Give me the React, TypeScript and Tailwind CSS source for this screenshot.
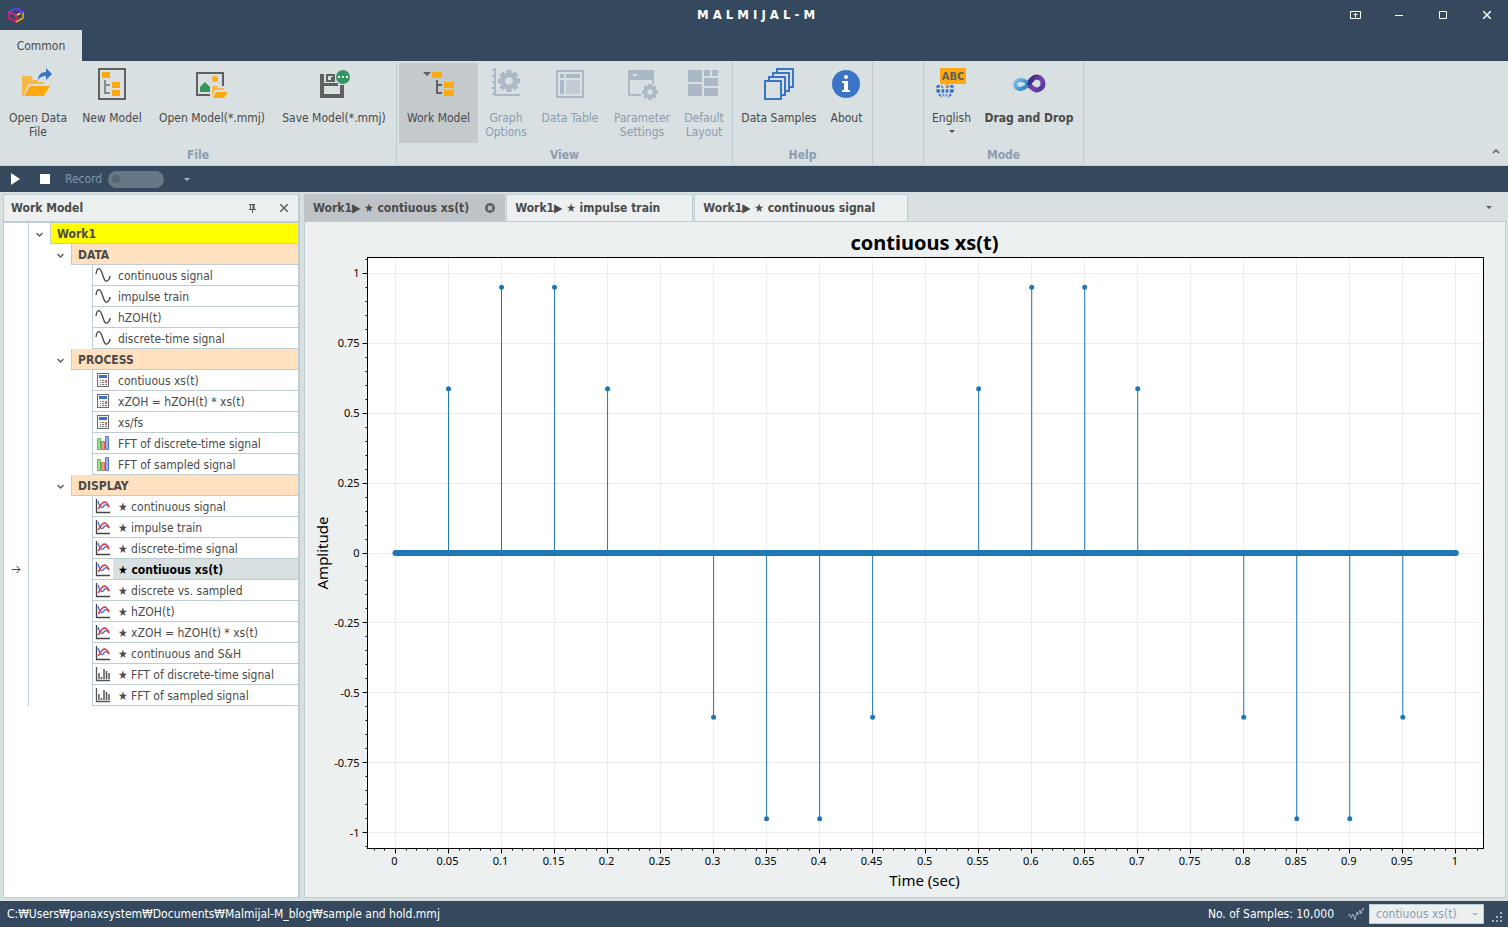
import React, { useLayoutEffect, useRef, useState } from "react";
import clsx from "clsx";

const GRAY = "#606060";
const AMBER = "#fda90f";
const BLUE = "#3b74c4";
const MUTED = "#abb8c5";

const Gear: React.FC<{ cx: number; cy: number; size: number }> = ({ cx, cy, size }) => (
  <g transform={`translate(${cx} ${cy}) scale(${size / 22})`} fill={MUTED}>
    {[0, 45, 90, 135].map((angle) => (
      <rect key={angle} x="-2.5" y="-11" width="5" height="22" transform={`rotate(${angle})`} />
    ))}
    <circle r="8.5" />
    <circle r="3.8" fill="#d8e0e1" />
  </g>
);

const Icon: React.FC<{ children: React.ReactNode }> = ({ children }) => (
  <svg className="size-8 shrink-0 overflow-visible" viewBox="0 0 32 32" fill="none" aria-hidden="true">
    {children}
  </svg>
);

const OpenDataIcon = () => (
  <Icon>
    <path d="M0 28V8h9l2 4h5v2h6v2H7L1 28z" fill="#f6b846" />
    <path d="M8 18h20l-6 10H2z" fill={AMBER} />
    <path d="M24 0l6 6-6 6V8c-4 0-6 1-8 4 0-5 3-8 8-8z" fill={BLUE} />
  </Icon>
);

const NewModelIcon = () => (
  <Icon>
    <rect x="3" y="1" width="26" height="30" stroke={GRAY} strokeWidth="2" />
    <path d="M6 4h8v6H6zM16 14h8v6h-8zM16 22h8v6h-8z" fill={AMBER} />
    <path d="M9 12v13h5M9 17h5" stroke="#8b8b8b" strokeWidth="2" />
  </Icon>
);

const OpenModelIcon = () => (
  <Icon>
    <path d="M14 27H1V5h26v13" stroke={GRAY} strokeWidth="2" />
    <circle cx="19" cy="11" r="3" fill={AMBER} />
    <path d="M4 24v-5l5-5 5 5v5z" fill="#36955e" />
    <path d="M16 29V18h5l1 2h6v2h-9l-3 7z" fill="#f6b846" />
    <path d="M20 24h12l-4 6H17z" fill={AMBER} />
  </Icon>
);

const SaveModelIcon = () => (
  <Icon>
    <path d="M2 6h4v9h14v3H6v8h16v-9h4v13H2z" fill={GRAY} />
    <path d="M9 7h7v6H9z" stroke={GRAY} strokeWidth="2" />
    <path d="M13 9h2v3h-2z" fill={GRAY} />
    <circle cx="25" cy="9" r="8" fill="#d8e0e1" />
    <circle cx="25" cy="9" r="7" fill="#36955e" />
    <path d="M20 8h2v2h-2zM24 8h2v2h-2zM28 8h2v2h-2z" fill="#fff" />
  </Icon>
);

const WorkModelIcon = () => (
  <Icon>
    <path d="M0 4h8L4 8z" fill={GRAY} />
    <path d="M9 4h10v6H9zM21 14h10v6H21zM21 22h10v6H21z" fill={AMBER} />
    <path d="M14 12v13h5M14 17h5" stroke={GRAY} strokeWidth="2" />
  </Icon>
);

const GraphIcon = () => (
  <Icon>
    <path d="M5 0v27h25M2 2h3M2 8h3M2 14h3M2 20h3M2 26h3" stroke={MUTED} strokeWidth="2" />
    <Gear cx={19} cy={13} size={22} />
  </Icon>
);

const TableIcon = () => (
  <Icon>
    <rect x="3" y="3" width="26" height="26" stroke={MUTED} strokeWidth="2" />
    <path d="M6 6h4v4H6zM12 6h14v4H12zM6 12h4v14H6z" fill={MUTED} />
    <path d="M12 12h14v14H12z" fill="#c3cbd3" />
  </Icon>
);

const ParameterIcon = () => (
  <Icon>
    <path d="M2 2h26v10H2z" fill={MUTED} />
    <path d="M3 10v17h12M27 10v6" stroke={MUTED} strokeWidth="2" />
    <path d="M6 6h6l-3 3z" fill="#d8e0e1" />
    <Gear cx={24} cy={24} size={16} />
  </Icon>
);

const LayoutIcon = () => (
  <Icon>
    <path d="M0 2h14v12H0zM16 2h6v6h-6zM24 2h6v6h-6zM16 10h14v8H16zM0 16h14v12H0zM16 20h14v8H16z" fill={MUTED} />
  </Icon>
);

const SamplesIcon = () => (
  <Icon>
    {[0, 4, 8, 12].map((n) => (
      <rect key={n} x={14 - n} y={1 + n} width="16" height="18" fill="#d8e0e1" stroke={BLUE} strokeWidth="2" />
    ))}
  </Icon>
);

const AboutIcon = () => (
  <Icon>
    <circle cx="15" cy="16" r="14" fill={BLUE} />
    <circle cx="15" cy="9" r="2" fill="#fff" />
    <path d="M11 13h6v9h2v2h-8v-2h2v-7h-2z" fill="#fff" />
  </Icon>
);

const EnglishIcon = () => (
  <Icon>
    <circle cx="9" cy="21" r="9" fill={BLUE} />
    <path d="M0 20.500h18M0 25.500h18M9 12v18" stroke="#d8e0e1" strokeWidth="1.500" />
    <ellipse cx="9" cy="20" rx="4.500" ry="10" stroke="#d8e0e1" strokeWidth="1.500" />
    <path d="M-1 10h20v7h-7l-4 4-2-4h-7z" fill="#d8e0e1" />
    <path d="M4 0h26v16H13l-3 3-1-3H4z" fill={AMBER} />
    <text x="17" y="12" textAnchor="middle" fill={GRAY} className="text-[11px] font-bold">ABC</text>
  </Icon>
);

const DragIcon = () => (
  <Icon>
    <defs>
      <linearGradient id="loop" x1="16" x2="32" y1="8" y2="24" gradientUnits="userSpaceOnUse">
        <stop stopColor="#2f2779" />
        <stop offset="0.5" stopColor="#7a3fb0" />
        <stop offset="1" stopColor="#41318c" />
      </linearGradient>
      <linearGradient id="loopLeft" x1="0" x2="16" y1="10" y2="22" gradientUnits="userSpaceOnUse">
        <stop stopColor="#8ccff0" />
        <stop offset="0.5" stopColor="#4fa3dc" />
        <stop offset="1" stopColor="#2d6fae" />
      </linearGradient>
    </defs>
    <path
      d="M16 17c3 3 5 5 8 5 8-1 8-12 0-13-4 0-6 3-9 7"
      stroke="url(#loop)"
      strokeWidth="5"
    />
    <path
      d="M17 18c-3-4-6-6-9-6-7 0-8 8-1 9 4 0 7-3 10-6"
      stroke="url(#loopLeft)"
      strokeWidth="4"
    />
    <path d="M15 17c2-2 3-4 5-6" stroke="#41318c" strokeWidth="4" />
  </Icon>
);

type RibbonItem = {
  label: string;
  icon: React.FC;
  width: string;
  active?: boolean;
  disabled?: boolean;
  bold?: boolean;
  menu?: boolean;
};

const ribbonGroups: { name: string; items: RibbonItem[] }[] = [
  {
    name: "File",
    items: [
      { label: "Open Data File", icon: OpenDataIcon, width: "w-[72px]" },
      { label: "New Model", icon: NewModelIcon, width: "w-[76px]" },
      { label: "Open Model(*.mmj)", icon: OpenModelIcon, width: "w-[124px]" },
      { label: "Save Model(*.mmj)", icon: SaveModelIcon, width: "w-[120px]" },
    ],
  },
  {
    name: "View",
    items: [
      { label: "Work Model", icon: WorkModelIcon, width: "w-[79px]", active: true },
      { label: "Graph Options", icon: GraphIcon, width: "w-14", disabled: true },
      { label: "Data Table", icon: TableIcon, width: "w-[72px]", disabled: true },
      { label: "Parameter Settings", icon: ParameterIcon, width: "w-[72px]", disabled: true },
      { label: "Default Layout", icon: LayoutIcon, width: "w-[52px]", disabled: true },
    ],
  },
  {
    name: "Help",
    items: [
      { label: "Data Samples", icon: SamplesIcon, width: "w-[88px]" },
      { label: "About", icon: AboutIcon, width: "w-[47px]" },
    ],
  },
  { name: "", items: [] },
  {
    name: "Mode",
    items: [
      { label: "English", icon: EnglishIcon, width: "w-[51px]", menu: true },
      { label: "Drag and Drop", icon: DragIcon, width: "w-[104px]", bold: true },
    ],
  },
];

const Caret: React.FC<{ className?: string }> = ({ className }) => (
  <svg className={clsx("h-[3px] w-[6px]", className)} viewBox="0 0 6 3" fill="currentColor" aria-hidden="true">
    <path d="M0 0h6L3 3z" />
  </svg>
);

const Ribbon: React.FC = () => (
  <div className="flex h-[105px] shrink-0 border-b border-[#bdcdd1] bg-[#d8e0e1]">
    {ribbonGroups.map((group, i) => (
      <section
        key={i}
        aria-label={group.name || undefined}
        className="flex min-w-[51px] flex-col border-r border-[#bdcdd1] px-[2px] pt-[2px]"
      >
        <div className="flex h-20">
          {group.items.map((item) => (
            <button
              key={item.label}
              disabled={item.disabled}
              className={clsx(
                "flex flex-col items-center pt-[5px] leading-[14px]",
                item.width,
                item.active && "bg-[#c4c9cb]",
                item.disabled && "text-[#8c9db1]",
                item.bold && "font-bold"
              )}
            >
              <item.icon />
              <span className={clsx("mt-[11px]", item.label.includes("(") && "whitespace-nowrap")}>{item.label}</span>
              {item.menu && <Caret className="mt-[5px]" />}
            </button>
          ))}
        </div>
        <div className="mt-[5px] text-center leading-[14px] font-bold text-[#8c9db1]">{group.name}</div>
      </section>
    ))}
    <button aria-label="Collapse ribbon" className="mr-2 mb-2 ml-auto self-end">
      <svg className="h-2 w-2" viewBox="0 0 8 8" fill="none" stroke="#606060" strokeWidth="1.5">
        <path d="M1 4l3-3 3 3" />
      </svg>
    </button>
  </div>
);

const TitleBar: React.FC = () => (
  <header className="flex h-[30px] shrink-0 items-center text-white">
    <div className="flex-1 pl-2">
      <svg className="size-4" viewBox="0 0 16 16" fill="none" strokeWidth="1.5" strokeLinejoin="round">
        <path d="M1 5l7-4 7 4-7 3z" stroke="#3d5cff" />
        <path d="M1 5l7 3v7l-7-4z" stroke="#f0147c" />
        <path d="M8 8v7" stroke="#f02040" />
        <path d="M15 5v6l-7 4" stroke="#f2a526" />
        <path d="M9 8l6-3" stroke="#e8d02a" />
        <path d="M8 1l7 4-3 1.500" stroke="#6a35e8" />
      </svg>
    </div>
    <h1 className="text-[13px] font-bold whitespace-pre">M A L M I J A L - M</h1>
    <div className="flex flex-1 justify-end gap-[10px] pr-1">
      <button aria-label="Ribbon display options" className="grid h-6 w-[34px] place-items-center">
        <svg className="h-2 w-[11px]" viewBox="0 0 11 8" fill="none" stroke="currentColor">
          <path d="M.5.5h10v7H.5zM5.5 6.500V2M3.500 3.500h4" />
        </svg>
      </button>
      <button aria-label="Minimize" className="grid h-6 w-[34px] place-items-center">
        <svg className="size-2" viewBox="0 0 8 8" fill="none" stroke="currentColor">
          <path d="M0 4.500h8" />
        </svg>
      </button>
      <button aria-label="Maximize" className="grid h-6 w-[34px] place-items-center">
        <svg className="size-2" viewBox="0 0 8 8" fill="none" stroke="currentColor">
          <path d="M.5.5h7v7h-7z" />
        </svg>
      </button>
      <button aria-label="Close" className="grid h-6 w-[34px] place-items-center">
        <svg className="size-2" viewBox="0 0 8 8" fill="none" stroke="currentColor" strokeWidth="1.5">
          <path d="M0 0l8 8M8 0L0 8" />
        </svg>
      </button>
    </div>
  </header>
);

const RunBar: React.FC = () => (
  <div className="flex h-[26px] shrink-0 items-center text-[#8096a9]">
    <button aria-label="Run" className="ml-[10px] text-white">
      <svg className="h-3 w-[10px]" viewBox="0 0 10 12" fill="currentColor">
        <path d="M1 0l9 6-9 6z" />
      </svg>
    </button>
    <button aria-label="Stop" className="ml-5 size-[10px] bg-white" />
    <label className="ml-[15px] flex items-center gap-[6px]">
      Record
      <input
        type="checkbox"
        role="switch"
        disabled
        className="flex h-[17px] w-14 appearance-none items-center rounded-full bg-[#667886] pl-1 before:size-2 before:rounded-full before:bg-[#56656f] before:content-['']"
      />
    </label>
    <button aria-label="More commands" className="ml-5 text-[#a9b7c2]">
      <Caret />
    </button>
  </div>
);

type Kind = "wave" | "calc" | "fft" | "plot" | "bars";

const TreeIcon: React.FC<{ kind: Kind }> = ({ kind }) => (
  <svg className="size-4 shrink-0" viewBox="0 0 16 16" fill="none" aria-hidden="true">
    {kind === "wave" && <path d="M1 7C2 0 5 0 7 6s3 9 5 8c2-1 3-3 3-5" stroke="#444" strokeWidth="1.3" />}
    {kind === "calc" && (
      <>
        <rect x="2.500" y="1.500" width="11" height="13" fill="#f4f4f4" stroke="#6b6b6b" />
        <path d="M4 3h8v3H4z" fill="#3f6fc0" />
        <path d="M5 8h1v1H5zM7 8h2v1H7zM5 10h1v1H5zM7 10h2v1H7zM5 12h1v1H5zM7 12h2v1H7z" fill="#777" />
        <path d="M10 8h2v3h-2z" fill="#cf6a6a" />
        <path d="M10 12h2v1h-2z" fill="#777" />
      </>
    )}
    {kind === "fft" && (
      <>
        <path d="M2.500 3.500h3v11h-3z" fill="#9be38a" stroke="#5fb850" />
        <path d="M6.500 6.500h3v8h-3z" fill="#f39a92" stroke="#d36a60" />
        <path d="M10.500 1.500h3v13h-3z" fill="#9bb2f4" stroke="#5676cc" />
      </>
    )}
    {kind === "plot" && (
      <>
        <path d="M1.500 1v13.500H15" stroke="#444" strokeWidth="1.300" />
        <path d="M3 3c1 4 3 8 5 6s3-4 6 0" stroke="#4468d8" strokeWidth="1.300" />
        <path d="M3 11c2-2 3-6 6-7 3 0 4 2 5 5" stroke="#e03848" strokeWidth="1.500" />
      </>
    )}
    {kind === "bars" && (
      <>
        <path d="M1.500 1v13.500H15" stroke="#555" strokeWidth="1.300" />
        <path d="M4 7v6M6.500 11v2M9 3v10M11.500 5v8M14 7v6" stroke="#555" strokeWidth="1.500" />
      </>
    )}
  </svg>
);

const sections: { title: string; items: [Kind, string][] }[] = [
  {
    title: "DATA",
    items: [
      ["wave", "continuous signal"],
      ["wave", "impulse train"],
      ["wave", "hZOH(t)"],
      ["wave", "discrete-time signal"],
    ],
  },
  {
    title: "PROCESS",
    items: [
      ["calc", "contiuous xs(t)"],
      ["calc", "xZOH = hZOH(t) * xs(t)"],
      ["calc", "xs/fs"],
      ["fft", "FFT of discrete-time signal"],
      ["fft", "FFT of sampled signal"],
    ],
  },
  {
    title: "DISPLAY",
    items: [
      ["plot", "★ continuous signal"],
      ["plot", "★ impulse train"],
      ["plot", "★ discrete-time signal"],
      ["plot", "★ contiuous xs(t)"],
      ["plot", "★ discrete vs. sampled"],
      ["plot", "★ hZOH(t)"],
      ["plot", "★ xZOH = hZOH(t) * xs(t)"],
      ["plot", "★ continuous and S&H"],
      ["bars", "★ FFT of discrete-time signal"],
      ["bars", "★ FFT of sampled signal"],
    ],
  },
];

const Gutter: React.FC<{ current?: boolean }> = ({ current }) => (
  <span className="grid w-[25px] shrink-0 place-items-center border-r border-[#bdcdd1] text-[#34495e]">
    {current && (
      <svg className="h-[9px] w-[9px]" viewBox="0 0 9 9" fill="none" stroke="currentColor">
        <path d="M0 4.500h8M4.500 1L8 4.500 4.500 8" />
      </svg>
    )}
  </span>
);

const Expander: React.FC<{ label: string; open: boolean; onClick: () => void }> = ({ label, open, onClick }) => (
  <button aria-label={label} aria-expanded={open} onClick={onClick} className="grid w-[21px] shrink-0 place-items-center pt-[2px]">
    <svg className="h-[5px] w-[7px]" viewBox="0 0 7 5" fill="none" stroke="#606060" strokeWidth="1.500">
      <path d="M.5 1l3 3 3-3" />
    </svg>
  </button>
);

const WorkModelPanel: React.FC = () => {
  const [closed, setClosed] = useState<string[]>([]);
  const [selected, setSelected] = useState("★ contiuous xs(t)");
  const toggle = (name: string) =>
    setClosed((prev) => (prev.includes(name) ? prev.filter((n) => n !== name) : [...prev, name]));

  return (
    <aside className="flex w-[297px] shrink-0 flex-col border border-r-2 border-[#bdcdd1] bg-white">
      <div className="flex h-7 shrink-0 items-center border-b-2 border-[#bdcdd1] bg-[#ecf0f1] pl-[7px]">
        <h2 className="flex-1 font-bold">Work Model</h2>
        <button aria-label="Pin" className="grid size-6 place-items-center">
          <svg className="h-[9px] w-[7px]" viewBox="0 0 7 9" fill="none" stroke="#555">
            <path d="M1.500 0v5M0 .5h6M0 5.500h7M3.500 5v4" />
            <path d="M4.500 0v5" strokeWidth="2" />
          </svg>
        </button>
        <button aria-label="Close panel" className="mr-[2px] ml-2 grid size-6 place-items-center">
          <svg className="size-2" viewBox="0 0 8 8" stroke="#606060" strokeWidth="1.500">
            <path d="M0 0l8 8M8 0L0 8" />
          </svg>
        </button>
      </div>
      <ul className="leading-[22px]">
        <li className="flex h-[21px]">
          <Gutter />
          <Expander label="Toggle Work1" open={!closed.includes("Work1")} onClick={() => toggle("Work1")} />
          <span className="flex-1 border-b border-l border-[#bdcdd1] bg-[#ffff00] pl-[6px] font-bold">Work1</span>
        </li>
        {!closed.includes("Work1") &&
          sections.map((section) => (
            <li key={section.title}>
              <div className="flex h-[21px]">
                <Gutter />
                <span className="w-[21px]" />
                <Expander
                  label={`Toggle ${section.title}`}
                  open={!closed.includes(section.title)}
                  onClick={() => toggle(section.title)}
                />
                <span className="flex-1 border-b border-l border-[#bdcdd1] bg-[#ffe1c0] pl-[6px] font-bold">
                  {section.title}
                </span>
              </div>
              {!closed.includes(section.title) && (
                <ul>
                  {section.items.map(([kind, label]) => {
                    const current = label === selected;
                    return (
                      <li key={label} className="flex h-[21px]">
                        <Gutter current={current} />
                        <span className="w-[63px]" />
                        <button
                          onClick={() => setSelected(label)}
                          className="flex flex-1 items-center border-b border-l border-[#bdcdd1] pl-[2px] text-left"
                        >
                          <TreeIcon kind={kind} />
                          <span
                            className={clsx(
                              "ml-[2px] h-5 flex-1 pl-[5px] whitespace-nowrap",
                              current && "bg-[#d8e0e1] font-bold text-black"
                            )}
                          >
                            {label}
                          </span>
                        </button>
                      </li>
                    );
                  })}
                </ul>
              )}
            </li>
          ))}
      </ul>
    </aside>
  );
};

const samples = Array.from({ length: 21 }, (_, i) => ({
  t: i * 0.05,
  value: Math.sin(4 * Math.PI * i * 0.05),
})).filter((s) => Math.abs(s.value) > 0.01);

const range = (from: number, to: number) => Array.from({ length: to - from + 1 }, (_, i) => from + i);

const StemChart: React.FC = () => {
  const ref = useRef<HTMLDivElement>(null);
  const [size, setSize] = useState({ width: 1200, height: 675 });

  useLayoutEffect(() => {
    const el = ref.current;
    if (!el) return;
    const update = () => setSize({ width: el.clientWidth, height: el.clientHeight });
    update();
    const observer = new ResizeObserver(update);
    observer.observe(el);
    return () => observer.disconnect();
  }, []);

  const left = 62.5;
  const top = 35.5;
  const right = size.width - 21.5;
  const bottom = size.height - 48.5;
  const x = (t: number) => left + ((t + 0.0264) / 1.0525) * (right - left);
  const y = (v: number) => (top + bottom) / 2 - (v / 2.1144) * (bottom - top);
  const snap = (n: number) => Math.floor(n) + 0.5;

  return (
    <div ref={ref} className="min-h-0 flex-1 overflow-hidden">
      <svg
        width={size.width}
        height={size.height}
        className="block font-['Noto_Sans',sans-serif] text-[11px]"
        role="img"
        aria-label="contiuous xs(t)"
      >
        <rect x={left} y={top} width={right - left} height={bottom - top} fill="#fff" />
        {range(0, 20).map((i) => (
          <path key={i} d={`M${snap(x(i / 20))} ${top}V${bottom}`} stroke="#ededed" />
        ))}
        {range(-4, 4).map((i) => (
          <path key={i} d={`M${left} ${snap(y(i / 4))}H${right}`} stroke="#ededed" />
        ))}
        <g stroke="#000">
          {range(-2, 102).map((i) => (
            <path key={i} d={`M${snap(x(i / 100))} ${bottom}v${i % 5 === 0 && i >= 0 && i <= 100 ? 5 : 2}`} />
          ))}
          {range(-21, 21).map((i) => (
            <path key={i} d={`M${left} ${snap(y(i / 20))}h${i % 5 === 0 ? -5 : -2}`} />
          ))}
        </g>
        <rect x={left} y={top} width={right - left} height={bottom - top} fill="none" stroke="#000" />
        {range(0, 20).map((i) => (
          <text key={i} x={x(i / 20) - 1} y={bottom + 16} textAnchor="middle">
            {i / 20}
          </text>
        ))}
        {range(-4, 4).map((i) => (
          <text key={i} x={left - 8} y={y(i / 4) + 4} textAnchor="end">
            {i / 4}
          </text>
        ))}
        <g stroke="#1f77b4" fill="#1f77b4">
          {samples.map(({ t, value }) => (
            <g key={t}>
              <path d={`M${x(t)} ${y(0)}V${y(value)}`} />
              <circle cx={x(t)} cy={y(value)} r="2.5" stroke="none" />
            </g>
          ))}
          <path d={`M${x(0)} ${y(0)}H${x(1)}`} strokeWidth="6" strokeLinecap="round" />
        </g>
        <text x={(left + right) / 2 - 1} y="28" textAnchor="middle" className="text-[20px] font-bold">
          contiuous xs(t)
        </text>
        <text x={(left + right) / 2 - 1} y={bottom + 37} textAnchor="middle" className="text-[15px]">
          Time (sec)
        </text>
        <text transform={`translate(23 ${(top + bottom) / 2}) rotate(-90)`} textAnchor="middle" className="text-[15px]">
          Amplitude
        </text>
      </svg>
    </div>
  );
};

const tabs = ["Work1▶ ★ contiuous xs(t)", "Work1▶ ★ impulse train", "Work1▶ ★ continuous signal"];

const Documents: React.FC = () => {
  const [active, setActive] = useState(0);
  return (
    <main className="ml-1 flex min-w-0 flex-1 flex-col">
      <div className="flex h-7 shrink-0 gap-px border-b border-[#bdcdd1]" role="tablist">
        {tabs.map((tab, i) => (
          <div
            key={tab}
            className={clsx(
              "flex items-center border border-b-0 font-bold",
              i === active ? "border-[#bdc3c7] bg-[#bdc3c7] pr-[9px]" : "border-[#bdcdd1] bg-[#ecf0f1] pr-8"
            )}
          >
            <button role="tab" aria-selected={i === active} onClick={() => setActive(i)} className="h-full pl-2 whitespace-nowrap">
              {tab}
            </button>
            {i === active && (
              <button aria-label="Close tab" className="ml-4">
                <svg className="size-[10px]" viewBox="0 0 10 10">
                  <circle cx="5" cy="5" r="5" fill="#606060" />
                  <path d="M3 3l4 4M7 3L3 7" stroke="#d5d9dc" strokeWidth="1.500" />
                </svg>
              </button>
            )}
          </div>
        ))}
        <button aria-label="Open documents" className="mr-[14px] ml-auto text-[#606060]">
          <Caret />
        </button>
      </div>
      <div className="flex min-h-0 flex-1 flex-col border border-t-0 border-[#bdcdd1] bg-[#ecf0f1]">
        <StemChart />
      </div>
    </main>
  );
};

const StatusBar: React.FC = () => (
  <footer className="flex h-[26px] shrink-0 items-center pr-1 pl-[7px] text-white">
    <span className="flex-1">C:₩Users₩panaxsystem₩Documents₩Malmijal-M_blog₩sample and hold.mmj</span>
    <span>No. of Samples: 10,000</span>
    <svg className="mx-[14px] mr-[5px] h-[14px] w-4" viewBox="0 0 16 14" fill="none" stroke="#9aaab8" aria-hidden="true">
      <path d="M0 9l2-2 1 4 2-4 2 6 2-8 1 3 2-5 1 4 2-6 1 2 1-3" />
    </svg>
    <div className="relative">
      <select
        aria-label="Signal"
        disabled
        className="h-5 w-[115px] appearance-none border border-[#bdcdd1] bg-[#ecf0f1] pl-[6px] leading-[18px] text-[#8c9db1] opacity-100"
      >
        <option>contiuous xs(t)</option>
      </select>
      <Caret className="absolute top-[9px] right-[6px] text-[#b3bdc4]" />
    </div>
    <svg className="mt-2 ml-2 size-3" viewBox="0 0 12 12" fill="#a3b1bd" aria-hidden="true">
      <path d="M8 0h2v2H8zM4 4h2v2H4zM8 4h2v2H8zM0 8h2v2H0zM4 8h2v2H4zM8 8h2v2H8z" />
    </svg>
  </footer>
);

const App: React.FC = () => (
  <div className="flex h-screen flex-col overflow-hidden bg-[#34495e] font-['DejaVu_Sans_Condensed','DejaVu_Sans','Noto_Sans_CJK_KR',sans-serif] text-[12px] text-[#4a4a4a]">
    <TitleBar />
    <nav className="flex h-[31px] shrink-0">
      <button className="w-[82px] bg-[#d8e0e1]">Common</button>
    </nav>
    <Ribbon />
    <RunBar />
    <div className="flex min-h-0 flex-1 bg-[#d8e0e1] pt-[2px] pr-[2px] pb-[3px] pl-[3px]">
      <WorkModelPanel />
      <Documents />
    </div>
    <StatusBar />
  </div>
);

export default App;
